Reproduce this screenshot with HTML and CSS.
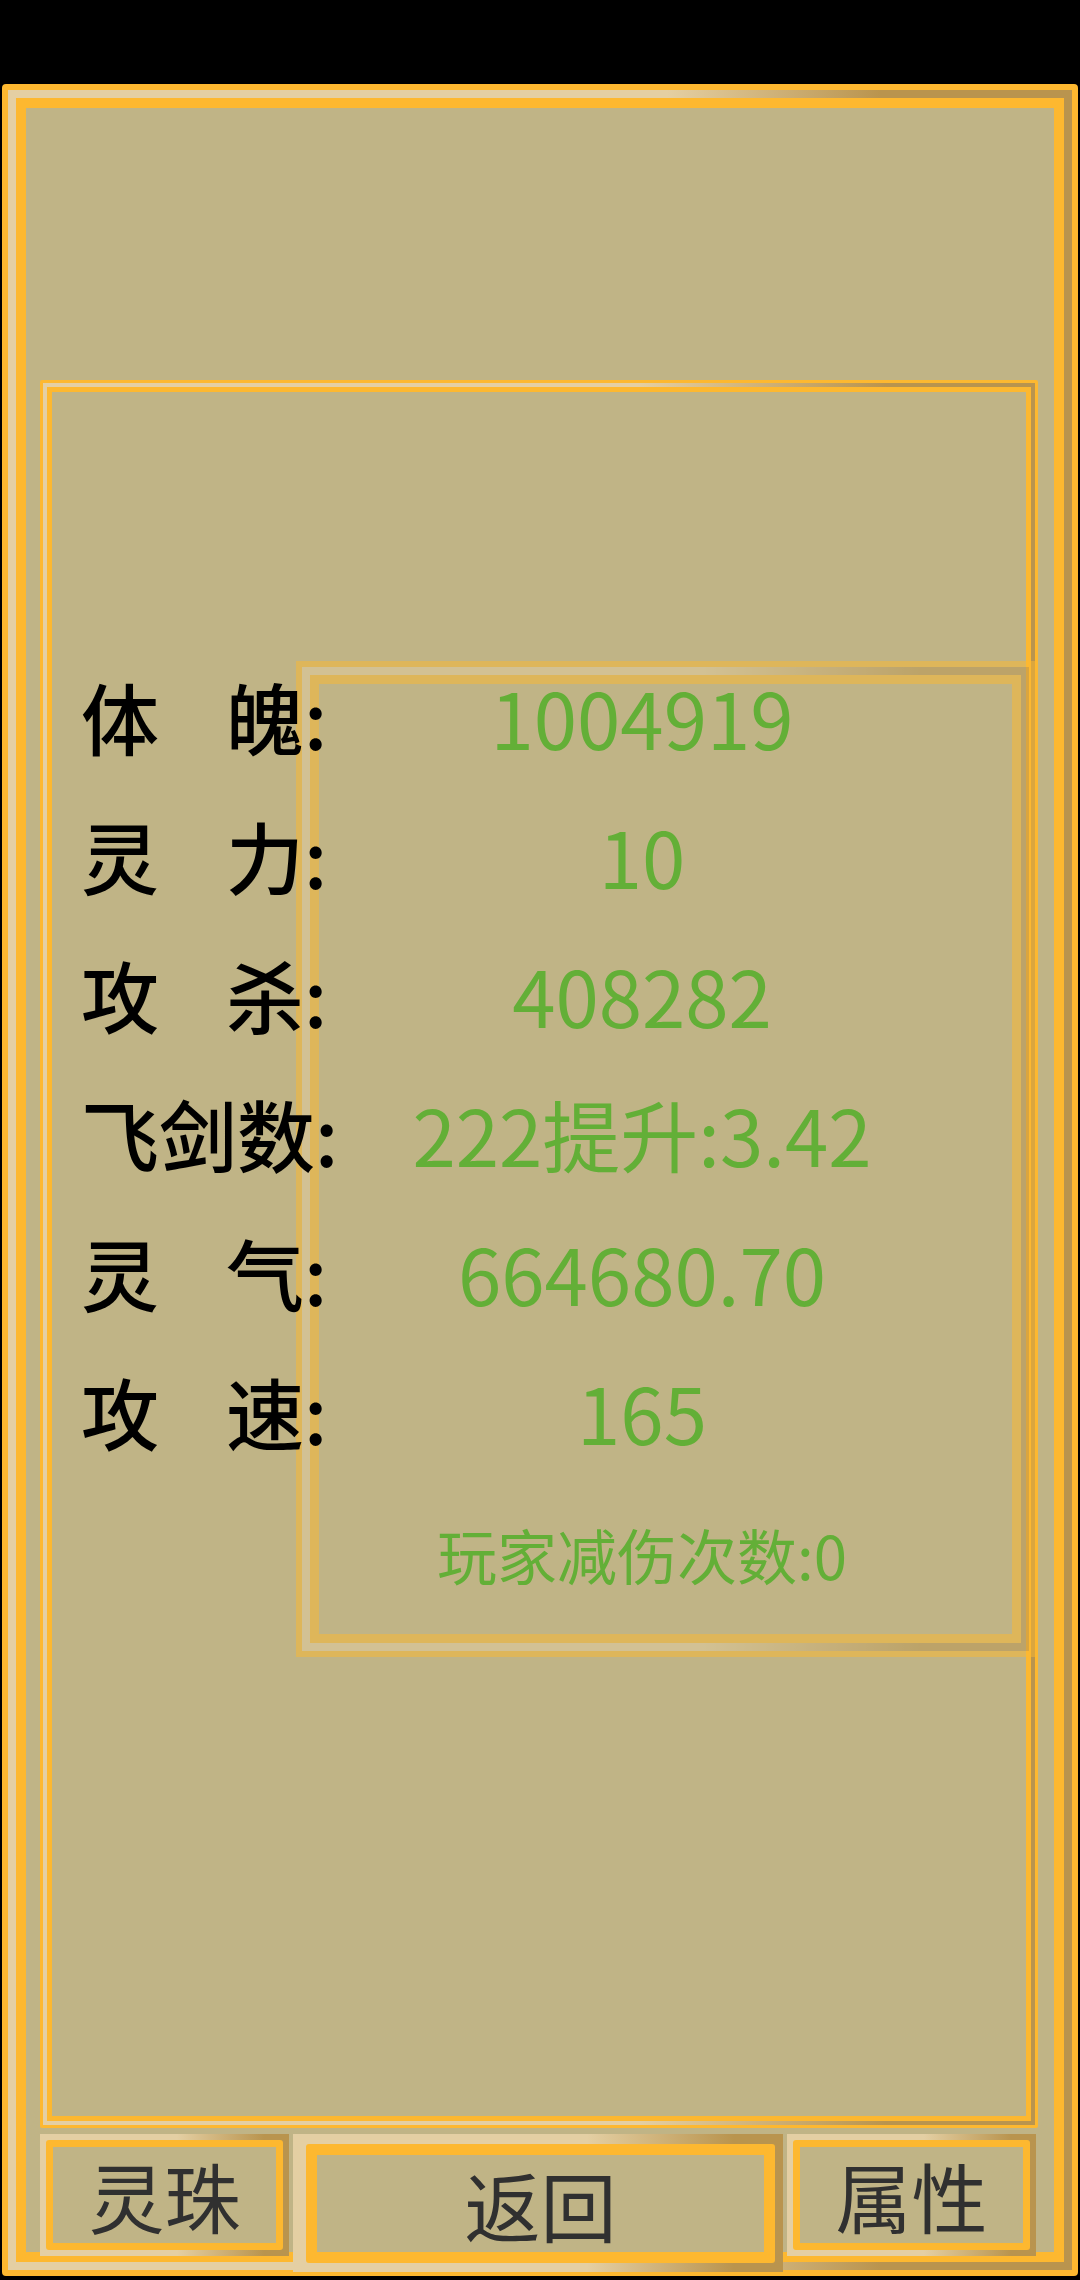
FILE: index.html
```html
<!DOCTYPE html>
<html lang="zh-CN">
<head>
<meta charset="utf-8">
<title>属性</title>
<link rel="stylesheet" href="styles.css">
</head>
<body>
<div class="screen">
  <div class="statusbar"></div>
  <div class="frame">
    <div class="frame-mid">
      <div class="frame-inner">
        <div class="panel">
          <div class="panel-mid">
            <div class="panel-inner">
              <div class="stats-box">
                <div class="box-mid"><div class="box-inner"></div></div>
              </div>
              <div class="stats">
                <div class="stat-row"><div class="label">体<span class="gap"> </span>魄:</div><div class="value">1004919</div></div>
                <div class="stat-row"><div class="label">灵<span class="gap"> </span>力:</div><div class="value">10</div></div>
                <div class="stat-row"><div class="label">攻<span class="gap"> </span>杀:</div><div class="value">408282</div></div>
                <div class="stat-row"><div class="label">飞剑数:</div><div class="value">222提升:3.42</div></div>
                <div class="stat-row"><div class="label">灵<span class="gap"> </span>气:</div><div class="value">664680.70</div></div>
                <div class="stat-row"><div class="label">攻<span class="gap"> </span>速:</div><div class="value">165</div></div>
                <div class="stat-row note-row"><div class="label"></div><div class="note">玩家减伤次数:0</div></div>
              </div>
            </div>
          </div>
        </div>
        <div class="buttons">
          <div class="btn btn-side"><div class="btn-mid"><div class="btn-inner">灵珠</div></div></div>
          <div class="btn btn-back"><div class="btn-mid"><div class="btn-inner">返回</div></div></div>
          <div class="btn btn-side"><div class="btn-mid"><div class="btn-inner">属性</div></div></div>
        </div>
      </div>
    </div>
  </div>
</div>
</body>
</html>
```

FILE: styles.css
```css
* { box-sizing: border-box; }

html, body {
  margin: 0;
  padding: 0;
  background: #000;
}

body {
  font-family: "Noto Sans CJK SC", "Noto Sans", sans-serif;
}

.screen {
  width: 1080px;
  height: 2280px;
  display: flex;
  flex-direction: column;
  background: #000;
}

.statusbar {
  height: 84px;
  flex: none;
  background: #000;
}

/* outer frame */
.frame {
  flex: 1;
  margin: 0 2px 4px 2px;
  border: 6px solid #FDB830;
  border-radius: 4px;
  display: flex;
  background: #FDB830;
}

.frame-mid {
  flex: 1;
  display: flex;
  padding: 8px;
  background: linear-gradient(to right, #E4CFA3 0%, #E4CFA3 62%, #B9944E 82%, #B9944E 100%);
}

.frame-inner {
  flex: 1;
  display: flex;
  flex-direction: column;
  border: 10px solid #FDB830;
  background: #C0B486;
  padding: 272px 16px 0 14px;
}

/* main panel */
.panel {
  height: 1748px;
  flex: none;
  display: flex;
  border: 3px solid #FDB830;
  border-radius: 2px;
}

.panel-mid {
  flex: 1;
  display: flex;
  padding: 4px;
  background: linear-gradient(to right, #E4CFA3 0%, #E4CFA3 60%, #B9944E 85%, #B9944E 100%);
}

.panel-inner {
  flex: 1;
  position: relative;
  border: 5px solid #FDB830;
  background: #C0B486;
}

/* translucent stats frame behind the values */
.stats-box {
  position: absolute;
  left: 244px;
  top: 269px;
  width: 739px;
  height: 996px;
  display: flex;
  border: 6px solid #FDB830;
  opacity: 0.5;
  z-index: 0;
}

.box-mid {
  flex: 1;
  display: flex;
  padding: 8px;
  background: linear-gradient(to right, #E4CFA3 0%, #E4CFA3 55%, #B9944E 85%, #B9944E 100%);
}

.box-inner {
  flex: 1;
  border: 9px solid #FDB830;
  background: #C0B486;
}

.stats {
  position: relative;
  z-index: 1;
  padding: 254px 0 0 29px;
  display: flex;
  flex-direction: column;
}

.stat-row {
  height: 139px;
  display: flex;
  align-items: center;
}

.label {
  width: 250px;
  flex: none;
  font-size: 78px;
  font-weight: 500;
  line-height: 1;
  color: #000;
  white-space: nowrap;
}

.gap {
  display: inline-block;
  width: 0.86em;
}

.value {
  width: 622px;
  flex: none;
  text-align: center;
  font-size: 78px;
  line-height: 1;
  color: #63AF37;
  white-space: nowrap;
}

.note-row {
  margin-top: 4px;
}

.note {
  width: 622px;
  flex: none;
  text-align: center;
  font-size: 60px;
  line-height: 1;
  color: #63AF37;
  white-space: nowrap;
}

/* bottom buttons */
.buttons {
  display: flex;
  align-items: flex-start;
  gap: 4px;
  margin-top: 6px;
  height: 116px;
}

.btn {
  display: flex;
  flex: none;
}

.btn-side {
  width: 249px;
  height: 122px;
}

.btn-back {
  width: 490px;
  height: 138px;
}

.btn-mid {
  flex: 1;
  display: flex;
  padding: 6px;
  background: linear-gradient(to right, #E4CFA3 0%, #E4CFA3 55%, #B9944E 90%, #B9944E 100%);
}

.btn-back .btn-mid {
  padding: 10px 8px 9px 13px;
  background: linear-gradient(to right, #E4CFA3 0%, #E4CFA3 60%, #B9944E 90%, #B9944E 100%);
}

.btn-inner {
  flex: 1;
  display: flex;
  align-items: center;
  justify-content: center;
  border: 7px solid #FDB830;
  border-radius: 3px;
  background: #C0B486;
  font-size: 76px;
  line-height: 1;
  color: #303030;
  white-space: nowrap;
}

.btn-back .btn-inner {
  border-width: 11px;
}
```
